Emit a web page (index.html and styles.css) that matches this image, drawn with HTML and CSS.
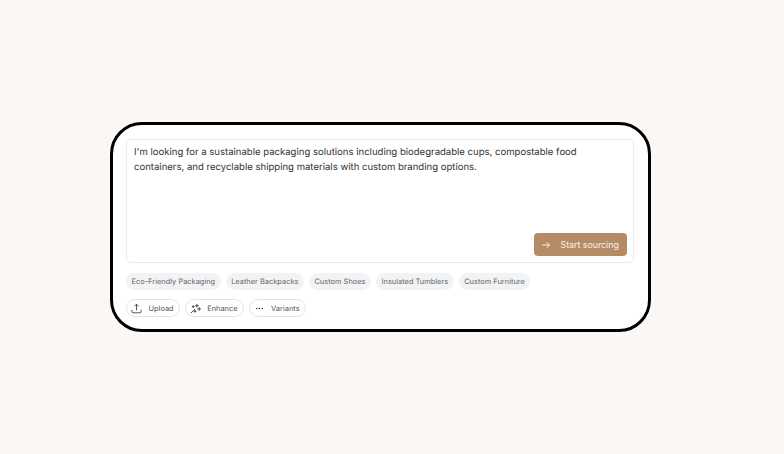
FILE: index.html
```html
<!DOCTYPE html>
<html lang="en">
<head>
    <title>Start sourcing</title>
    <meta charset="UTF-8">
    <meta name="viewport" content="width=device-width, initial-scale=1.0">
    <link rel="stylesheet" href="styles.css">
</head>
<body>
    <div class="card">
        <div class="prompt-box">
            <p class="prompt-text">I'm looking for a sustainable packaging solutions including biodegradable cups, compostable food containers, and recyclable shipping materials with custom branding options.</p>
            <button class="start-btn">
                <svg class="start-icon" viewBox="0 0 12 12" width="10" height="10" fill="none" stroke="currentColor" stroke-width="1.2"><path d="M1.500 6h9M6.800 2.500 10.300 6l-3.500 3.500"/></svg>
                <span>Start sourcing</span>
            </button>
        </div>
        <div class="chips">
            <span class="chip">Eco-Friendly Packaging</span>
            <span class="chip">Leather Backpacks</span>
            <span class="chip">Custom Shoes</span>
            <span class="chip">Insulated Tumblers</span>
            <span class="chip">Custom Furniture</span>
        </div>
        <div class="tools">
            <span class="tool">
                <svg viewBox="0 0 12 12" width="11" height="11" fill="none" stroke="#333" stroke-width="0.9"><path d="M6 8V1.500M3.700 3.600 6 1.300l2.300 2.300M1 7.500v2a1.200 1.200 0 0 0 1.200 1.200h7.600A1.200 1.200 0 0 0 11 9.500v-2"/></svg>
                <span>Upload</span>
            </span>
            <span class="tool">
                <svg viewBox="0 0 12 12" width="11" height="11" fill="none" stroke="#222" stroke-width="0.85"><path d="M1 11 5.500 6.500M7.500 1v4M5.500 3h4M10 4.500v4M8 6.500h4M3.500 2.500v3M2 4h3M5.500 7.500v3M4 9h3"/></svg>
                <span>Enhance</span>
            </span>
            <span class="tool">
                <svg viewBox="0 0 12 12" width="11" height="11" fill="#333"><circle cx="3" cy="6" r="0.800"/><circle cx="6" cy="6" r="0.800"/><circle cx="9" cy="6" r="0.800"/></svg>
                <span>Variants</span>
            </span>
        </div>
    </div>
</body>
</html>
```

FILE: styles.css
```css
body {
    background-color: #fbf7f4;
    margin: 0;
    padding: 122px 0 0 110px;
    height: 454px;
    box-sizing: border-box;
    overflow: hidden;
    font-family: Inter, "Liberation Sans", sans-serif;
    text-rendering: geometricPrecision;
}

.card {
    width: 541px;
    height: 210px;
    box-sizing: border-box;
    background-color: #fff;
    border: 3px solid #000;
    border-radius: 32px;
    padding: 14px 14px 0 13px;
}

.prompt-box {
    height: 124px;
    box-sizing: border-box;
    border: 1px solid #ececec;
    border-radius: 4px;
    padding: 5px 6.500px 6px 7px;
    display: flex;
    flex-direction: column;
    justify-content: space-between;
}

.prompt-text {
    margin: 0;
    font-size: 9.550px;
    line-height: 15px;
    color: #333;
}

.start-btn {
    align-self: flex-end;
    width: 93px;
    height: 23px;
    border: none;
    border-radius: 4px;
    background-color: #b58b66;
    color: #f8f1ea;
    font-family: inherit;
    font-size: 8.800px;
    padding: 0 0 0 7px;
    display: flex;
    align-items: center;
    gap: 10px;
}

.start-icon {
    flex: none;
}

.chips {
    display: flex;
    gap: 5px;
    margin-top: 10px;
}

.chip {
    height: 17px;
    line-height: 17px;
    padding: 0 5.500px;
    border-radius: 9px;
    background-color: #f2f3f4;
    color: #666;
    font-size: 7.450px;
    white-space: nowrap;
}

.tools {
    display: flex;
    gap: 5px;
    margin-top: 9px;
}

.tool {
    height: 18px;
    box-sizing: border-box;
    padding: 0 5px 0 4px;
    border: 1px solid #e4e4e4;
    border-radius: 9px;
    color: #555;
    font-size: 7.450px;
    display: flex;
    align-items: center;
    gap: 6.500px;
    white-space: nowrap;
}
```
